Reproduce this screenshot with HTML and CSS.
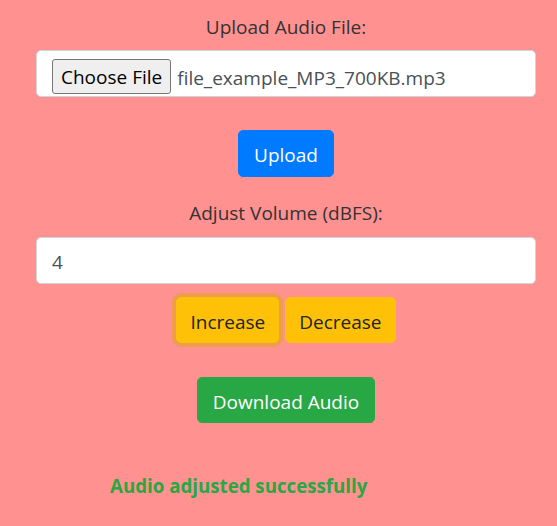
FILE: index.html
```html
<!DOCTYPE html>
<html lang="en">
<head>
<meta charset="utf-8">
<title>Audio Volume Adjuster</title>
<link rel="stylesheet" href="styles.css">
</head>
<body>
<main class="app">
  <form class="upload-form">
    <label class="field-label label-upload">Upload Audio File:</label>
    <div class="file-box">
      <span class="file-btn">Choose File</span>
      <span class="file-name">file_example_MP3_700KB.mp3</span>
    </div>
    <div class="actions upload-actions">
      <button type="button" class="btn btn-primary">Upload</button>
    </div>
  </form>

  <div class="volume-form">
    <label class="field-label label-volume">Adjust Volume (dBFS):</label>
    <div class="text-input">4</div>
    <div class="actions adjust-actions">
      <button type="button" class="btn btn-warning is-focused">Increase</button>
      <button type="button" class="btn btn-warning">Decrease</button>
    </div>
    <div class="actions download-actions">
      <button type="button" class="btn btn-success">Download Audio</button>
    </div>
  </div>

  <p class="message">Audio adjusted successfully</p>
</main>
</body>
</html>
```
FILE: styles.css
```css
* { box-sizing: border-box; }

body {
  margin: 0;
  background: #ff9191;
  font-family: "Open Sans", "Noto Sans", sans-serif;
  font-size: 19px;
  color: #333333;
}

.app {
  width: 500px;
  margin-left: 36px;
  padding-top: 12px;
  text-align: center;
}

.upload-form, .volume-form { margin: 0; }

.field-label {
  display: block;
  line-height: 30px;
}
.label-upload { margin-bottom: 8px; }
.label-volume { margin-top: 21px; margin-bottom: 9px; }

.file-box {
  display: flex;
  align-items: flex-start;
  gap: 6px;
  height: 47px;
  padding: 8px 15px 0;
  background: #ffffff;
  border: 1px solid #ced4da;
  border-radius: 5px;
  text-align: left;
}

.file-btn {
  display: inline-block;
  height: 35px;
  line-height: 31px;
  padding: 2px 8px 0;
  background: #efefef;
  border: 1px solid #767676;
  border-radius: 3px;
  color: #000000;
  white-space: nowrap;
}

.file-name {
  line-height: 33px;
  padding-top: 3px;
  color: #495057;
  white-space: nowrap;
}

.text-input {
  height: 47px;
  padding: 10px 15px 6px;
  line-height: 29px;
  background: #ffffff;
  border: 1px solid #ced4da;
  border-radius: 5px;
  color: #495057;
  text-align: left;
}

.actions {
  display: flex;
  justify-content: center;
  gap: 6px;
}
.upload-actions { margin-top: 33px; }
.adjust-actions { margin-top: 13px; }
.download-actions { margin-top: 34px; }

.btn {
  height: 46px;
  padding: 4px 15px 0;
  font-family: inherit;
  font-size: 19px;
  line-height: 40px;
  border: 1px solid transparent;
  border-radius: 5px;
  cursor: pointer;
}
.upload-actions .btn { height: 47px; line-height: 41px; }
.adjust-actions .btn { padding-left: 13px; padding-right: 13px; }

.btn-primary { background: #007bff; border-color: #007bff; color: #ffffff; }
.btn-warning { background: #ffc107; border-color: #ffc107; color: #212529; }
.btn-success { background: #28a745; border-color: #28a745; color: #ffffff; }

.is-focused { box-shadow: 0 0 0 4px rgba(222, 170, 12, 0.5); }

.message {
  margin: 48px 0 0;
  padding-left: 74px;
  text-align: left;
  font-size: 18.7px;
  font-weight: 700;
  line-height: 30px;
  color: #28a745;
}
```
